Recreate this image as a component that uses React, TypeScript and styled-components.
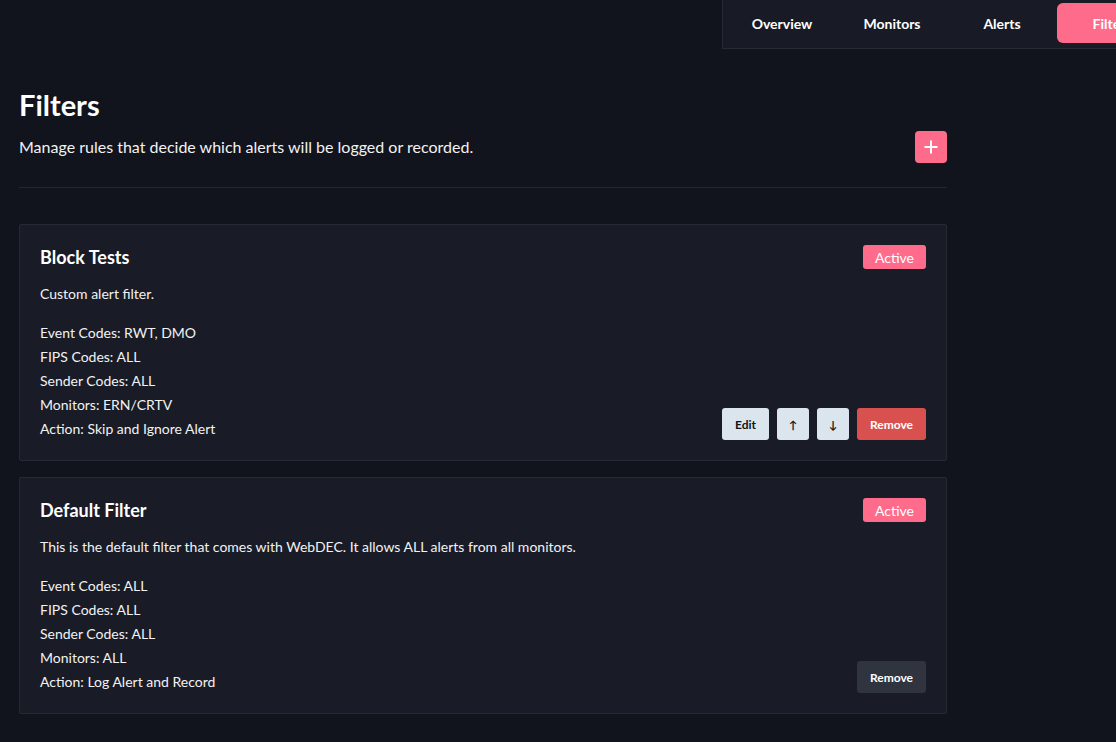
import styled, { createGlobalStyle } from 'styled-components';

const GlobalStyle = createGlobalStyle`
	html, body {
		margin: 0;
		padding: 0;
		background: #11141c;
		overflow-x: hidden;
	}
	body {
		font-family: Lato, 'Open Sans', sans-serif;
		color: #f2f2f4;
	}
	* {
		box-sizing: border-box;
	}
`;

const Page = styled.div`
	min-height: 742px;
	background: #11141c;
`;

const HeaderBar = styled.header`
	display: flex;
	height: 49px;
`;

const Nav = styled.nav`
	display: flex;
	flex-shrink: 0;
	margin-left: 722px;
	padding: 3px 4px 4px;
	background: #181b25;
	border-left: 1px solid #262a35;
	border-bottom: 1px solid #262a35;
`;

type NavItemProps = {
	active?: boolean;
};
const NavItem = styled.a<NavItemProps>`
	display: flex;
	align-items: center;
	justify-content: center;
	width: 110px;
	height: 40px;
	flex-shrink: 0;
	border-radius: 6px;
	font-size: 14px;
	font-weight: 700;
	color: #fff;
	text-decoration: none;
	background: ${({ active }) => (active ? '#ff6b8b' : 'transparent')};
`;

const Main = styled.main`
	width: 966px;
	padding: 38px 19px 0;
`;

const PageHeader = styled.div`
	display: flex;
	align-items: flex-end;
	justify-content: space-between;
	padding-bottom: 24px;
	border-bottom: 1px solid #222631;
`;

const Title = styled.h1`
	margin: 0 0 12px;
	font-size: 29px;
	font-weight: 700;
	line-height: 36px;
	color: #fff;
`;

const Subtitle = styled.p`
	margin: 0 0 4px;
	font-size: 16px;
	line-height: 24px;
`;

const AddButton = styled.button`
	all: unset;
	display: flex;
	align-items: center;
	justify-content: center;
	width: 32px;
	height: 32px;
	border-radius: 4px;
	background: #ff6b8b;
	cursor: pointer;
`;

const FilterList = styled.div`
	display: flex;
	flex-direction: column;
	gap: 16px;
	margin-top: 36px;
`;

const Card = styled.section`
	padding: 20px 20px 19px;
	background: #191c26;
	border: 1px solid #262a35;
	border-radius: 2px;
`;

const CardHeader = styled.div`
	display: flex;
	align-items: center;
	justify-content: space-between;
	height: 24px;
	margin-bottom: 13px;
`;

const CardTitle = styled.h2`
	margin: 0;
	font-size: 18px;
	font-weight: 700;
	color: #fff;
`;

const Badge = styled.span`
	display: flex;
	align-items: center;
	justify-content: center;
	width: 63px;
	height: 24px;
	border-radius: 3px;
	background: #ff6b8b;
	font-size: 14px;
	color: #fff;
`;

const Description = styled.p`
	margin: 0 0 15px;
	font-size: 14px;
	line-height: 24px;
`;

const CardBody = styled.div`
	display: flex;
	align-items: flex-end;
	justify-content: space-between;
`;

const Rules = styled.ul`
	margin: 0;
	padding: 0;
	list-style: none;
`;

const Rule = styled.li`
	font-size: 14px;
	line-height: 24px;
`;

const Actions = styled.div`
	display: flex;
	gap: 8px;
	margin-bottom: 1px;
`;

type ActionButtonProps = {
	variant?: 'light' | 'danger' | 'muted';
	square?: boolean;
};
const ActionButton = styled.button<ActionButtonProps>`
	all: unset;
	display: flex;
	align-items: center;
	justify-content: center;
	height: 32px;
	padding: ${({ square }) => (square ? '0' : '0 13px')};
	width: ${({ square }) => (square ? '32px' : 'auto')};
	border-radius: 3px;
	font-size: ${({ square }) => (square ? '11px' : '12px')};
	font-weight: 700;
	cursor: pointer;
	background: ${({ variant }) => (variant === 'danger' ? '#d9514f' : variant === 'muted' ? '#30343f' : '#dbe5ee')};
	color: ${({ variant }) => (variant === 'light' ? '#111318' : '#fff')};
`;

type Filter = {
	name: string;
	description: string;
	events: string;
	fips: string;
	senders: string;
	monitors: string;
	action: string;
	locked?: boolean;
};

const filters: Filter[] = [
	{
		name: 'Block Tests',
		description: 'Custom alert filter.',
		events: 'RWT, DMO',
		fips: 'ALL',
		senders: 'ALL',
		monitors: 'ERN/CRTV',
		action: 'Skip and Ignore Alert',
	},
	{
		name: 'Default Filter',
		description: 'This is the default filter that comes with WebDEC. It allows ALL alerts from all monitors.',
		events: 'ALL',
		fips: 'ALL',
		senders: 'ALL',
		monitors: 'ALL',
		action: 'Log Alert and Record',
		locked: true,
	},
];

const PlusIcon = () => (
	<svg width='16' height='16' viewBox='0 0 16 16'>
		<path d='M8 1.5v13M1.5 8h13' stroke='#fff' strokeWidth='2' />
	</svg>
);

const FilterCard = ({ filter }: { filter: Filter }) => (
	<Card>
		<CardHeader>
			<CardTitle>{filter.name}</CardTitle>
			<Badge>Active</Badge>
		</CardHeader>
		<Description>{filter.description}</Description>
		<CardBody>
			<Rules>
				<Rule>Event Codes: {filter.events}</Rule>
				<Rule>FIPS Codes: {filter.fips}</Rule>
				<Rule>Sender Codes: {filter.senders}</Rule>
				<Rule>Monitors: {filter.monitors}</Rule>
				<Rule>Action: {filter.action}</Rule>
			</Rules>
			<Actions>
				{!filter.locked && (
					<>
						<ActionButton variant='light'>Edit</ActionButton>
						<ActionButton variant='light' square>
							↑
						</ActionButton>
						<ActionButton variant='light' square>
							↓
						</ActionButton>
					</>
				)}
				<ActionButton variant={filter.locked ? 'muted' : 'danger'}>Remove</ActionButton>
			</Actions>
		</CardBody>
	</Card>
);

const App = () => (
	<Page>
		<GlobalStyle />
		<HeaderBar>
			<Nav>
				<NavItem>Overview</NavItem>
				<NavItem>Monitors</NavItem>
				<NavItem>Alerts</NavItem>
				<NavItem active>Filters</NavItem>
			</Nav>
		</HeaderBar>
		<Main>
			<PageHeader>
				<div>
					<Title>Filters</Title>
					<Subtitle>Manage rules that decide which alerts will be logged or recorded.</Subtitle>
				</div>
				<AddButton>
					<PlusIcon />
				</AddButton>
			</PageHeader>
			<FilterList>
				{filters.map((filter) => (
					<FilterCard key={filter.name} filter={filter} />
				))}
			</FilterList>
		</Main>
	</Page>
);

export default App;
